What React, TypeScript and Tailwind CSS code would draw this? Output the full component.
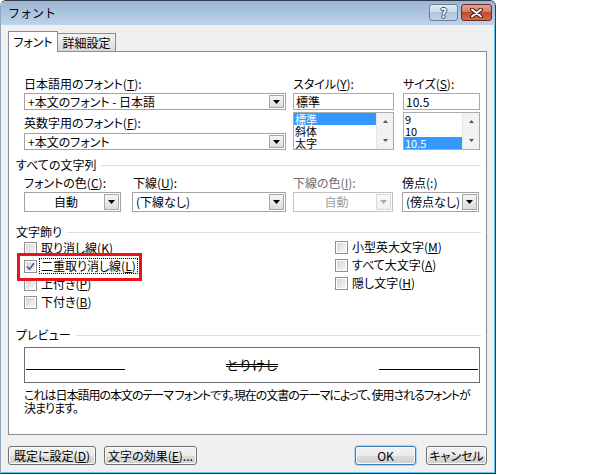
import type { ReactNode } from 'react';

const FONT = "font-['Noto_Sans_CJK_JP','Noto_Sans',sans-serif] [font-feature-settings:'palt']";

const DownArrow = ({ disabled }: { disabled?: boolean }) => (
  <svg width="7" height="4" viewBox="0 0 7 4">
    <path d="M0 0h7L3.5 4z" fill={disabled ? '#a8a8a8' : '#000'} />
  </svg>
);

const Combo = ({
  text,
  className,
  center,
  disabled,
}: {
  text: string;
  className: string;
  center?: boolean;
  disabled?: boolean;
}) => (
  <div
    className={`flex border bg-white p-[1px] ${disabled ? 'border-[#c2c2c2] text-[#a0a0a0]' : 'border-[#a3a3a3]'} ${className}`}
  >
    <div className={`flex flex-1 items-center pl-[2px] ${center ? 'justify-center' : ''}`}>{text}</div>
    <div
      className={`flex w-[15px] items-center justify-center border bg-linear-to-b ${
        disabled ? 'border-[#d6d6d6] from-[#fafafa] to-[#f0f0f0]' : 'border-[#a6a6a6] from-[#f6f6f6] to-[#dcdcdc]'
      }`}
    >
      <DownArrow disabled={disabled} />
    </div>
  </div>
);

const ListBox = ({ items, sel }: { items: string[]; sel: number }) => (
  <div className="mt-[2px] flex h-[38px] border border-[#a5acb5] bg-white">
    <div className="flex-1">
      {items.map((t, i) => (
        <div
          key={t}
          className={`h-[12px] pl-[1px] text-[11px] leading-[12px] ${i === sel ? 'bg-[#3399ff] text-white' : ''}`}
        >
          {t}
        </div>
      ))}
    </div>
    <div className="flex w-[17px] flex-col items-center justify-between border-l border-[#e6e6e6] bg-[#f2f2f2] py-[7px]">
      <svg width="5" height="3" viewBox="0 0 5 3">
        <path d="M2.5 0L5 3H0z" fill="#555" />
      </svg>
      <svg width="5" height="3" viewBox="0 0 5 3">
        <path d="M0 0h5L2.5 3z" fill="#555" />
      </svg>
    </div>
  </div>
);

const TextBox = ({ text }: { text: string }) => (
  <div className="mt-[2px] h-[17px] border border-[#a5acb5] bg-white pl-[2px] leading-[15px]">{text}</div>
);

const Check = ({ checked }: { checked?: boolean }) => (
  <span className="flex h-[13px] w-[13px] shrink-0 border border-[#8f8f8f] bg-white p-[1px]">
    <span className="flex flex-1 items-center justify-center bg-linear-to-br from-[#d6d6d6] to-[#f7f7f7]">
      {checked && (
        <svg width="9" height="9" viewBox="0 0 9 9">
          <path d="M1 4.5L3.5 7.2L8 1.2" stroke="#4a5f9c" strokeWidth="1.7" fill="none" />
        </svg>
      )}
    </span>
  </span>
);

const CheckRow = ({ children }: { children: ReactNode }) => (
  <div className="flex h-[18px] items-center">
    <Check />
    <span className="ml-[4px]">{children}</span>
  </div>
);

const Heading = ({ children }: { children: ReactNode }) => (
  <div className="flex items-center">
    <span>{children}</span>
    <span className="ml-[5px] h-px flex-1 bg-[#d5dfe5]" />
  </div>
);

const Btn = ({ children, className, def }: { children: ReactNode; className: string; def?: boolean }) => (
  <div
    className={`flex h-[19px] items-center justify-center rounded-[3px] border bg-[linear-gradient(#f2f2f2_0%,#ebebeb_50%,#dddddd_50%,#cfcfcf_100%)] shadow-[inset_0_0_0_1px_#fbfbfb] ${
      def ? 'border-[#3c7fb1] ring-1 ring-[#a9d8f5]' : 'border-[#707070]'
    } ${className}`}
  >
    {children}
  </div>
);

export default function App() {
  return (
    <div className={`h-[475px] w-[600px] bg-white text-[12px] leading-[14px] text-black ${FONT}`}>
      <div className="flex h-[474px] w-[496px] flex-col rounded-t-[6px] border border-[#2f3b48] border-l-[#8fa5bd]">
        {/* title bar */}
        <div className="flex h-[24px] items-start rounded-t-[5px] bg-linear-to-b from-[#9bb6d3] to-[#bcd3eb] pl-[7px] pr-[3px] pt-[3px]">
          <span className="mt-[2px] text-[12px] [font-feature-settings:normal]">フォント</span>
          <div className="ml-auto flex gap-[3px]">
            <div className="flex h-[17px] w-[29px] items-center justify-center rounded-[3px] border border-[#6c7f98] bg-[linear-gradient(#e3ecf6_0%,#c9d9ea_50%,#b1c6dd_50%,#bed2e7_100%)]">
              <span className="text-[13px] leading-none font-bold text-white [text-shadow:1px_0_#3b4c63,-1px_0_#3b4c63,0_1px_#3b4c63,0_-1px_#3b4c63]">
                ?
              </span>
            </div>
            <div className="flex h-[17px] w-[31px] items-center justify-center rounded-[3px] border border-[#6e2a22] bg-[linear-gradient(#e3a293_0%,#d27865_50%,#c34a32_50%,#cf6a4c_100%)]">
              <svg width="13" height="10" viewBox="0 0 13 10">
                <path d="M2 1.5L11 8.5M11 1.5L2 8.5" stroke="#3d1d1a" strokeWidth="4" strokeLinecap="round" />
                <path d="M2 1.5L11 8.5M11 1.5L2 8.5" stroke="#fff" strokeWidth="2" strokeLinecap="round" />
              </svg>
            </div>
          </div>
        </div>

        {/* body */}
        <div className="flex flex-1 flex-col border-r border-b border-[#62c3ea] bg-[#f0f0f0] pl-[7px] pr-[7px]">
          {/* tabs */}
          <div className="mt-[6px] flex h-[20px] items-end">
            <div className="z-10 -mb-px flex h-[21px] w-[50px] items-center justify-center border border-b-0 border-[#898c95] bg-white pb-[1px]">
              フォント
            </div>
            <div className="flex h-[18px] w-[58px] items-center justify-center border border-b-0 border-l-0 border-[#898c95] bg-linear-to-b from-[#f2f2f2] to-[#dadada]">
              詳細設定
            </div>
          </div>

          {/* panel */}
          <div className="flex h-[384px] flex-col border border-[#898c95] bg-white pl-[7px] pr-[5px]">
            <div className="mt-[25px] ml-[8px] flex">
              <div className="w-[262px]">
                <div>
                  日本語用のフォント(<u>T</u>):
                </div>
                <Combo text="+本文のフォント - 日本語" className="mt-[2px] h-[17px]" />
                <div className="mt-[6px]">
                  英数字用のフォント(<u>F</u>):
                </div>
                <Combo text="+本文のフォント" className="mt-[3px] h-[17px]" />
              </div>
              <div className="ml-[7px] w-[101px]">
                <div>
                  スタイル(<u>Y</u>):
                </div>
                <TextBox text="標準" />
                <ListBox items={['標準', '斜体', '太字']} sel={0} />
              </div>
              <div className="ml-[9px] w-[77px]">
                <div>
                  サイズ(<u>S</u>):
                </div>
                <TextBox text="10.5" />
                <ListBox items={['9', '10', '10.5']} sel={2} />
              </div>
            </div>

            <div className="mt-[8px]">
              <Heading>すべての文字列</Heading>
            </div>
            <div className="mt-[4px] ml-[8px] flex">
              <div className="w-[97px]">
                <div>
                  フォントの色(<u>C</u>):
                </div>
                <Combo text="自動" center className="mt-[2px] h-[20px]" />
              </div>
              <div className="ml-[11px] w-[154px]">
                <div className="pl-[1px]">
                  下線(<u>U</u>):
                </div>
                <Combo text="(下線なし)" className="mt-[2px] h-[20px]" />
              </div>
              <div className="ml-[7px] w-[100px]">
                <div className="text-[#6d6d6d]">
                  下線の色(<u>I</u>):
                </div>
                <Combo text="自動" center disabled className="mt-[2px] h-[20px]" />
              </div>
              <div className="ml-[9px] w-[77px]">
                <div>傍点(:)</div>
                <Combo text="(傍点なし)" className="mt-[2px] h-[20px] border-[#6f6f6f]" />
              </div>
            </div>

            <div className="mt-[13px]">
              <Heading>文字飾り</Heading>
            </div>
            <div className="ml-[8px] flex">
              <div className="w-[311px]">
                <CheckRow>
                  取り消し線(<u>K</u>)
                </CheckRow>
                <div className="relative flex h-[18px] items-center">
                  <Check checked />
                  <span className="ml-[2px] border border-dotted border-black px-[1px]">
                    二重取り消し線(<u>L</u>)
                  </span>
                  <div className="absolute -top-[4px] -left-[7px] h-[28px] w-[125px] border-[3px] border-[#e8131c]" />
                </div>
                <CheckRow>
                  上付き(<u>P</u>)
                </CheckRow>
                <CheckRow>
                  下付き(<u>B</u>)
                </CheckRow>
              </div>
              <div className="-mt-[1px]">
                <CheckRow>
                  小型英大文字(<u>M</u>)
                </CheckRow>
                <CheckRow>
                  すべて大文字(<u>A</u>)
                </CheckRow>
                <CheckRow>
                  隠し文字(<u>H</u>)
                </CheckRow>
              </div>
            </div>

            <div className="mt-[17px]">
              <Heading>プレビュー</Heading>
            </div>
            <div className="mt-[5px] ml-[8px] flex h-[36px] w-[456px] items-end border border-[#6f6f6f] px-[1px] pb-[12px]">
              <span className="h-px w-[99px] bg-black" />
              <div className="flex flex-1 justify-center">
                <span className="-mb-[3px] text-[13px] leading-[16px] line-through decoration-double [font-feature-settings:normal]">
                  とりけし
                </span>
              </div>
              <span className="h-px w-[99px] bg-black" />
            </div>
            <div className="mt-[5px] ml-[8px] leading-[13px] tracking-[-1px] whitespace-nowrap">
              これは日本語用の本文のテーマ フォントです。現在の文書のテーマによって、使用されるフォントが
              <br />
              決まります。
            </div>
          </div>

          {/* buttons */}
          <div className="mt-[11px] flex">
            <Btn className="w-[88px]">
              既定に設定(<u>D</u>)
            </Btn>
            <Btn className="ml-[8px] w-[93px]">
              文字の効果(<u>E</u>)...
            </Btn>
            <Btn def className="ml-auto w-[61px]">
              OK
            </Btn>
            <Btn className="ml-[10px] w-[61px]">キャンセル</Btn>
          </div>
        </div>
      </div>
    </div>
  );
}
